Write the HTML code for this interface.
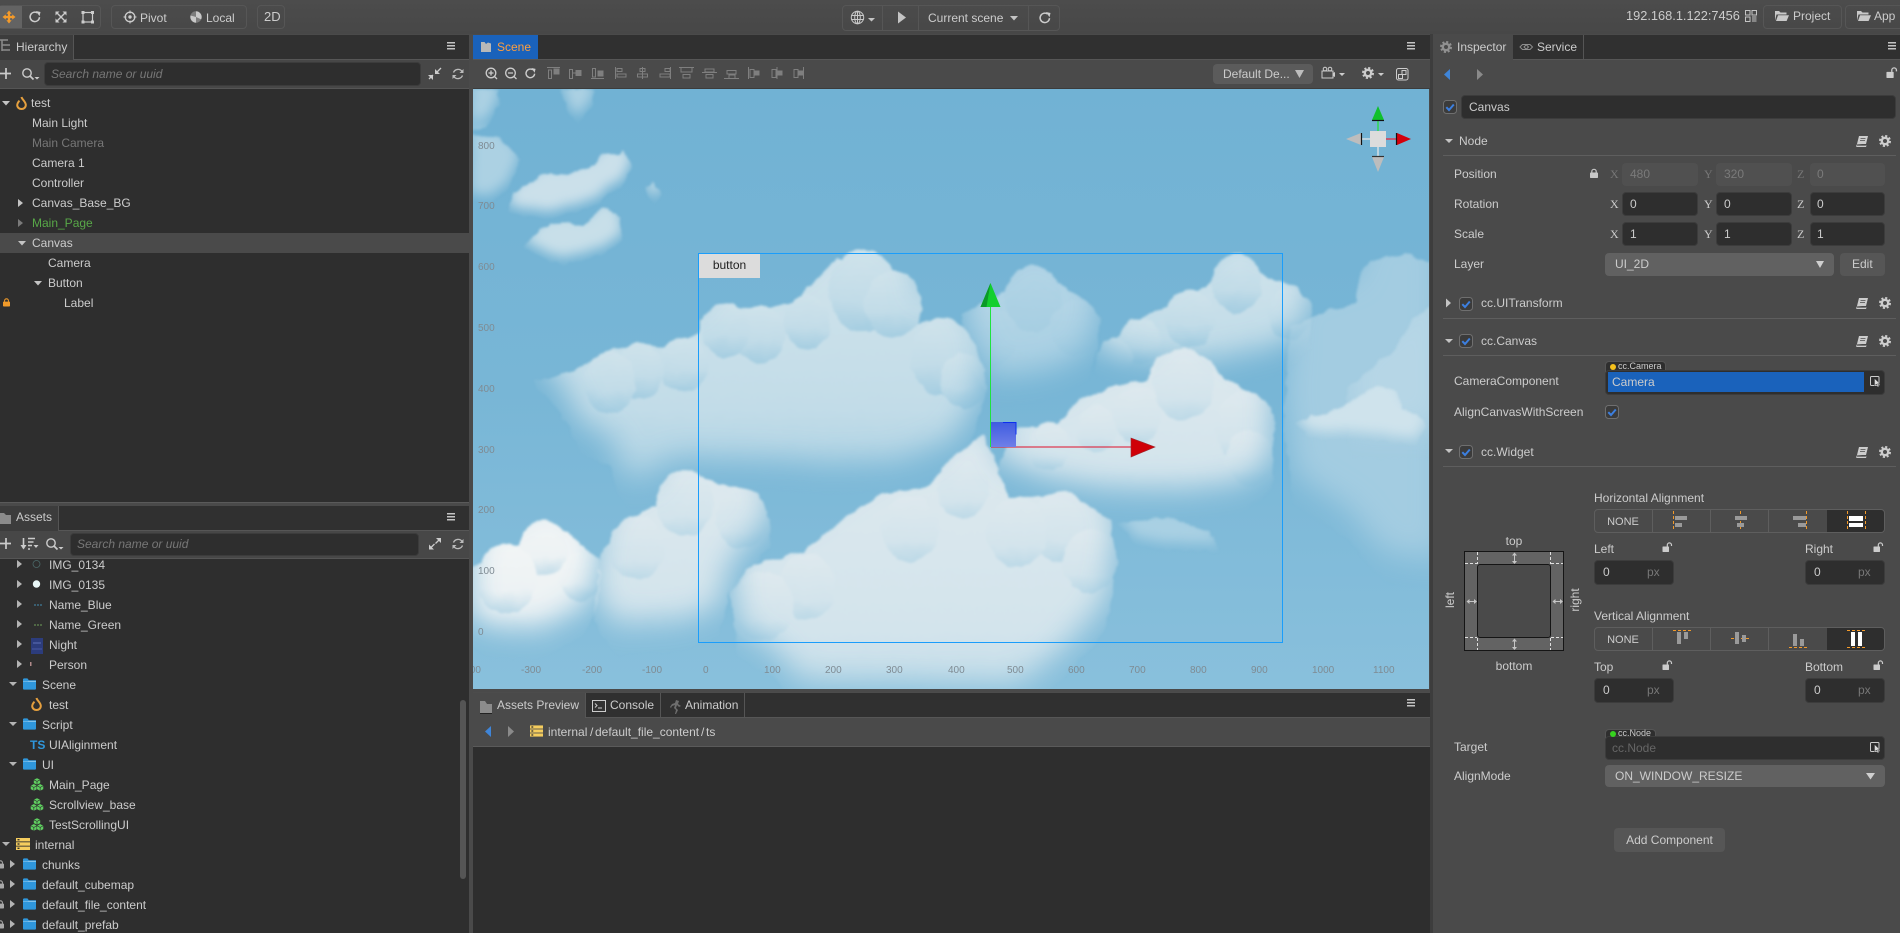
<!DOCTYPE html>
<html><head><meta charset="utf-8"><title>Cocos Creator</title>
<style>
html,body{margin:0;padding:0;width:1900px;height:933px;overflow:hidden;background:#4a4a4a}
body{position:relative;font:12px/20px "Liberation Sans",Arial,sans-serif;color:#ccc}
.b{position:absolute;box-sizing:border-box}
.t{position:absolute;white-space:pre;height:20px;line-height:20px;font-size:12px;color:#ccc}
.ru{position:absolute;white-space:pre;font-size:10px;line-height:12px;color:#7f8b93}
.i{background:#2e2e2e;border-radius:4px;border:1px solid #3c3c3c}
.o{border:1px solid #565656;border-radius:4px}
svg{position:absolute;left:0;top:0;overflow:visible}
</style></head><body>
<!-- top bar -->
<div class="b" style="left:0;top:0;width:1900px;height:34px;background:linear-gradient(#4c4c4c,#474747)"></div>
<div class="b o" style="left:-2px;top:5px;width:103px;height:24px"></div>
<div class="b" style="left:0;top:6px;width:22px;height:22px;background:#636363"></div>
<div class="b o" style="left:111px;top:5px;width:136px;height:24px"></div>
<div class="b o" style="left:257px;top:5px;width:28px;height:24px"></div>
<div class="b o" style="left:842px;top:5px;width:218px;height:26px"></div>
<div class="b" style="left:882px;top:6px;width:1px;height:24px;background:#565656"></div>
<div class="b" style="left:918px;top:6px;width:1px;height:24px;background:#565656"></div>
<div class="b" style="left:1028px;top:6px;width:1px;height:24px;background:#565656"></div>
<div class="b o" style="left:1763px;top:5px;width:79px;height:24px"></div>
<div class="b o" style="left:1845px;top:5px;width:70px;height:24px"></div>

<!-- hierarchy panel -->
<div class="b" style="left:0;top:35px;width:469px;height:467px;background:#2e2e2e"></div>
<div class="b" style="left:0;top:35px;width:469px;height:25px;background:#303030;border-bottom:1px solid #565656"></div>
<div class="b" style="left:0;top:35px;width:74px;height:25px;background:#3c3c3c;border-right:1px solid #555"></div>
<div class="b" style="left:0;top:60px;width:469px;height:29px;background:#474747;border-bottom:1px solid #555"></div>
<div class="b i" style="left:44px;top:62px;width:377px;height:24px"></div>
<div class="b" style="left:0;top:233px;width:469px;height:20px;background:#4a4a4a"></div>
<div class="b" style="left:0;top:502px;width:469px;height:1px;background:#5a5a5a"></div>

<!-- assets panel -->
<div class="b" style="left:0;top:506px;width:469px;height:427px;background:#2e2e2e"></div>
<div class="b" style="left:0;top:506px;width:469px;height:25px;background:#303030;border-bottom:1px solid #565656"></div>
<div class="b" style="left:0;top:506px;width:59px;height:25px;background:#3c3c3c;border-right:1px solid #555"></div>
<div class="b" style="left:0;top:531px;width:469px;height:28px;background:#474747;border-bottom:1px solid #555"></div>
<div class="b i" style="left:70px;top:533px;width:349px;height:23px"></div>
<div class="b" style="left:460px;top:700px;width:6px;height:179px;background:#555;border-radius:3px"></div>

<!-- scene panel -->
<div class="b" style="left:473px;top:35px;width:957px;height:25px;background:#303030;border-bottom:1px solid #565656"></div>
<div class="b" style="left:473px;top:35px;width:65px;height:24px;background:#1a62bb"></div>
<div class="b" style="left:473px;top:60px;width:957px;height:29px;background:#4a4a4a;border-bottom:1px solid #3c3c3c"></div>
<div class="b" style="left:1213px;top:64px;width:100px;height:20px;background:#5b5b5b;border-radius:4px"></div>

<!-- scene view -->
<svg width="1900" height="933" viewBox="0 0 1900 933" style="clip-path:polygon(473px 89px,1429px 89px,1429px 689px,473px 689px)">
<defs>
<linearGradient id="sky" x1="0" y1="0" x2="0" y2="1"><stop offset="0" stop-color="#71b2d4"/><stop offset=".5" stop-color="#78b6d6"/><stop offset="1" stop-color="#89c0dc"/></linearGradient>
<linearGradient id="w1" x1="0" y1="0" x2="0" y2="1"><stop offset="0" stop-color="#d0e3eb"/><stop offset=".6" stop-color="#c2dce8"/><stop offset="1" stop-color="#a4cde1"/></linearGradient>
<linearGradient id="w2" x1="0" y1="0" x2="0" y2="1"><stop offset="0" stop-color="#dee9ee"/><stop offset=".7" stop-color="#d3e4ec"/><stop offset="1" stop-color="#bcd9e7"/></linearGradient>
<linearGradient id="w3" x1="0" y1="0" x2="0" y2="1"><stop offset="0" stop-color="#f2f5f5"/><stop offset=".65" stop-color="#edf2f4"/><stop offset="1" stop-color="#c4dde9"/></linearGradient>
<linearGradient id="w4" x1="0" y1="0" x2="0" y2="1"><stop offset="0" stop-color="#b4d5e6"/><stop offset="1" stop-color="#a6cee2"/></linearGradient>
<linearGradient id="w5" x1="0" y1="0" x2="0" y2="1"><stop offset="0" stop-color="#9fcae0"/><stop offset="1" stop-color="#a8d0e3"/></linearGradient>
<filter id="f" x="-10%" y="-15%" width="120%" height="130%" color-interpolation-filters="sRGB">
<feTurbulence type="fractalNoise" baseFrequency=".07" numOctaves="3" seed="4" result="n"/>
<feDisplacementMap in="SourceGraphic" in2="n" scale="7" xChannelSelector="R" yChannelSelector="G" result="d"/>
<feGaussianBlur in="d" stdDeviation="1.2" result="a"/>
<feOffset in="d" dy="-30" result="o"/>
<feGaussianBlur in="o" stdDeviation="15" result="s"/>
<feComposite in="a" in2="s" operator="in"/>
</filter>
<filter id="g" x="-30%" y="-40%" width="160%" height="180%" color-interpolation-filters="sRGB">
<feTurbulence type="fractalNoise" baseFrequency=".1" numOctaves="3" seed="9" result="n"/>
<feDisplacementMap in="SourceGraphic" in2="n" scale="6" xChannelSelector="R" yChannelSelector="G" result="d"/>
<feGaussianBlur in="d" stdDeviation="1.2" result="a"/>
<feOffset in="d" dy="-8" result="o"/>
<feGaussianBlur in="o" stdDeviation="6" result="s"/>
<feComposite in="a" in2="s" operator="in"/>
</filter>
</defs>
<rect x="473" y="89" width="957" height="600" fill="url(#sky)"/>
<!-- right clouds (coords from x=950 origin) -->
<g filter="url(#f)"><g transform="translate(950,85) scale(.33333,.389)" fill="#a3cce1"><polygon points="1000,880 1020,620 1220,560 1240,480 1360,435 1480,460 1480,1300 1300,1280 1200,1170 1030,1080"/><circle cx="1320" cy="540" r="100"/><circle cx="1150" cy="680" r="100"/></g></g>
<g filter="url(#f)"><g transform="translate(950,85) scale(.33333,.389)" fill="#b6d6e6"><polygon points="1190,780 1320,690 1400,600 1480,540 1480,960 1200,960"/><circle cx="1440" cy="640" r="60"/></g></g>
<g filter="url(#g)"><g transform="translate(950,85) scale(.33333,.389)" fill="#cfe3ec"><polygon points="1030,870 1170,830 1280,770 1340,790 1360,830 1420,860 1400,930 1250,910 1100,910"/><circle cx="1300" cy="810" r="35"/><circle cx="1385" cy="880" r="38"/><circle cx="1090" cy="880" r="30"/></g></g>
<g filter="url(#g)"><g transform="translate(950,85) scale(.33333,.389)" fill="#a9d0e3"><polygon points="500,1130 650,1110 780,1150 810,1200 640,1195 560,1180"/></g></g>
<g filter="url(#f)"><g transform="translate(950,85) scale(.33333,.389)" fill="url(#w4)"><polygon points="30,590 170,530 250,465 330,510 400,550 450,600 440,680 420,760 300,810 130,830 60,720"/><circle cx="250" cy="550" r="85"/><circle cx="375" cy="625" r="72"/><circle cx="120" cy="650" r="80"/></g></g>
<g filter="url(#f)"><g transform="translate(950,85) scale(.33333,.389)" fill="url(#w1)"><polygon points="440,690 570,600 770,520 850,445 950,490 1040,520 1085,560 1080,680 1000,740 800,790 600,790 440,760"/><circle cx="860" cy="510" r="75"/><circle cx="1020" cy="590" r="65"/><circle cx="720" cy="600" r="75"/><circle cx="570" cy="660" r="62"/><circle cx="495" cy="700" r="50"/></g></g>
<!-- left clouds -->
<g filter="url(#g)"><g transform="translate(470,85) scale(.33333,.389)" fill="#acd1e3"><polygon points="0,10 85,10 90,50 50,110 0,120"/><polygon points="270,10 375,10 370,50 325,105 290,70"/><polygon points="0,130 90,135 150,190 120,260 70,300 0,300"/></g></g>
<g filter="url(#g)"><g transform="translate(470,85) scale(.33333,.389)" fill="#cbe0ea"><polygon points="130,280 220,230 300,225 360,210 460,170 490,210 440,260 380,310 250,345 110,330"/><circle cx="240" cy="285" r="50"/><circle cx="420" cy="225" r="50"/></g></g>
<g filter="url(#g)"><g transform="translate(470,85) scale(.33333,.389)" fill="#c8dfe9"><polygon points="160,415 210,370 280,350 340,365 400,310 450,340 460,400 390,440 280,465 200,440"/><circle cx="280" cy="410" r="52"/><circle cx="410" cy="375" r="45"/><polygon points="525,265 550,250 578,280 550,315"/></g></g>
<!-- big cloud B -->
<g filter="url(#f)"><g transform="translate(470,85) scale(.33333,.389)" fill="url(#w1)"><polygon points="190,760 300,740 430,680 520,665 590,675 690,640 690,600 780,565 860,575 980,555 1100,445 1240,460 1320,520 1330,610 1440,610 1510,670 1545,730 1540,820 1500,920 1440,1000 1250,1050 1100,1050 800,1040 600,1040 520,1090 480,1090 450,1060 420,980 330,950 300,880"/><circle cx="1180" cy="530" r="105"/><circle cx="1270" cy="565" r="85"/><circle cx="1010" cy="610" r="70"/><circle cx="870" cy="640" r="75"/><circle cx="770" cy="630" r="70"/><circle cx="640" cy="720" r="72"/><circle cx="510" cy="735" r="72"/><circle cx="420" cy="765" r="78"/><circle cx="1420" cy="700" r="98"/><circle cx="1480" cy="760" r="70"/></g></g>
<!-- E -->
<g filter="url(#f)"><g transform="translate(950,85) scale(.33333,.389)" fill="url(#w2)"><polygon points="200,880 310,880 390,810 500,770 590,760 620,700 700,685 780,710 830,760 900,795 975,850 965,1040 880,1100 700,1120 500,1120 300,1090 120,1030"/><circle cx="700" cy="770" r="92"/><circle cx="885" cy="880" r="90"/><circle cx="560" cy="850" r="72"/><circle cx="440" cy="885" r="60"/><circle cx="300" cy="930" r="62"/><circle cx="900" cy="960" r="72"/></g></g>
<!-- F -->
<g filter="url(#f)"><g transform="translate(470,85) scale(.33333,.389)" fill="url(#w2)"><polygon points="780,1300 850,1230 1000,1200 1130,1110 1240,1050 1380,1030 1440,960 1540,900 1620,1060 1720,1060 1820,1060 1920,1120 1940,1220 1910,1400 1840,1470 1770,1530 1640,1620 1000,1610 900,1520 800,1470"/><circle cx="1770" cy="1135" r="90"/><circle cx="1860" cy="1225" r="82"/><circle cx="1640" cy="1150" r="90"/><circle cx="1320" cy="1140" r="85"/><circle cx="1480" cy="1040" r="75"/><circle cx="1010" cy="1290" r="85"/><circle cx="880" cy="1340" r="90"/></g></g>
<!-- H -->
<g filter="url(#f)"><g transform="translate(470,85) scale(.33333,.389)" fill="url(#w2)"><polygon points="390,1210 480,1110 570,1080 590,1010 640,995 740,1020 830,1045 885,1080 905,1150 900,1190 780,1300 750,1420 650,1450 440,1470 370,1380"/><circle cx="645" cy="1075" r="85"/><circle cx="815" cy="1115" r="78"/><circle cx="500" cy="1190" r="82"/></g></g>
<!-- G -->
<g filter="url(#f)"><g transform="translate(470,85) scale(.33333,.389)" fill="url(#w3)"><polygon points="0,1240 150,1180 220,1125 290,1150 390,1220 385,1340 340,1420 200,1480 50,1470 0,1440"/><circle cx="222" cy="1190" r="72"/><circle cx="330" cy="1265" r="62"/><circle cx="110" cy="1270" r="90"/></g></g>
</svg>
<div class="ru" style="left:478px;top:141px">800</div><div class="ru" style="left:478px;top:201px">700</div><div class="ru" style="left:478px;top:262px">600</div><div class="ru" style="left:478px;top:323px">500</div><div class="ru" style="left:478px;top:384px">400</div><div class="ru" style="left:478px;top:445px">300</div><div class="ru" style="left:478px;top:505px">200</div><div class="ru" style="left:478px;top:566px">100</div><div class="ru" style="left:478px;top:627px">0</div>
<div class="ru" style="left:473px;top:665px;width:8px;overflow:hidden;direction:rtl">00</div><div class="ru" style="left:521px;top:665px">-300</div><div class="ru" style="left:582px;top:665px">-200</div><div class="ru" style="left:642px;top:665px">-100</div><div class="ru" style="left:703px;top:665px">0</div><div class="ru" style="left:764px;top:665px">100</div><div class="ru" style="left:825px;top:665px">200</div><div class="ru" style="left:886px;top:665px">300</div><div class="ru" style="left:948px;top:665px">400</div><div class="ru" style="left:1007px;top:665px">500</div><div class="ru" style="left:1068px;top:665px">600</div><div class="ru" style="left:1129px;top:665px">700</div><div class="ru" style="left:1190px;top:665px">800</div><div class="ru" style="left:1251px;top:665px">900</div><div class="ru" style="left:1312px;top:665px">1000</div><div class="ru" style="left:1373px;top:665px">1100</div>
<div class="b" style="left:698px;top:253px;width:585px;height:390px;border:1px solid #1a9dfb"></div>
<div class="b" style="left:699px;top:254px;width:61px;height:24px;background:#dcdcdc;color:#222;text-align:center;line-height:23px">button</div>

<!-- bottom preview panel -->
<div class="b" style="left:473px;top:692px;width:957px;height:241px;background:#2e2e2e"></div>
<div class="b" style="left:473px;top:692px;width:957px;height:26px;background:#303030;border-top:1px solid #4c4c4c;border-bottom:1px solid #565656"></div>
<div class="b" style="left:473px;top:693px;width:112px;height:25px;background:#4a4a4a"></div>
<div class="b" style="left:660px;top:693px;width:1px;height:24px;background:#555"></div>
<div class="b" style="left:744px;top:693px;width:1px;height:24px;background:#555"></div>
<div class="b" style="left:585px;top:693px;width:1px;height:24px;background:#555"></div>
<div class="b" style="left:473px;top:718px;width:957px;height:29px;background:#4a4a4a;border-bottom:1px solid #5a5a5a"></div>

<!-- inspector -->
<div class="b" style="left:1430px;top:34px;width:3px;height:899px;background:#3d3d3d"></div>
<div class="b" style="left:1433px;top:35px;width:467px;height:898px;background:#4a4a4a"></div>
<div class="b" style="left:1433px;top:35px;width:467px;height:25px;background:#303030;border-bottom:1px solid #565656"></div>
<div class="b" style="left:1433px;top:35px;width:80px;height:25px;background:#4a4a4a"></div>
<div class="b" style="left:1583px;top:35px;width:1px;height:24px;background:#555"></div>
<div class="b i" style="left:1461px;top:95px;width:435px;height:24px"></div>
<div class="b" style="left:1443px;top:155px;width:453px;height:1px;background:#5e5e5e"></div>
<div class="b" style="left:1443px;top:318px;width:453px;height:1px;background:#5e5e5e"></div>
<div class="b" style="left:1443px;top:355px;width:453px;height:1px;background:#5e5e5e"></div>
<div class="b" style="left:1443px;top:466px;width:453px;height:1px;background:#5e5e5e"></div>
<div class="b" style="left:1622px;top:163px;width:76px;height:23px;background:#505050;border-radius:4px"></div>
<div class="b" style="left:1716px;top:163px;width:76px;height:23px;background:#505050;border-radius:4px"></div>
<div class="b" style="left:1810px;top:163px;width:75px;height:23px;background:#505050;border-radius:4px"></div>
<div class="b i" style="left:1622px;top:192px;width:76px;height:24px"></div><div class="b i" style="left:1716px;top:192px;width:76px;height:24px"></div><div class="b i" style="left:1810px;top:192px;width:75px;height:24px"></div>
<div class="b i" style="left:1622px;top:222px;width:76px;height:24px"></div><div class="b i" style="left:1716px;top:222px;width:76px;height:24px"></div><div class="b i" style="left:1810px;top:222px;width:75px;height:24px"></div>
<div class="b" style="left:1605px;top:253px;width:229px;height:23px;background:#616161;border-radius:4px"></div>
<div class="b" style="left:1840px;top:253px;width:45px;height:23px;background:#565656;border-radius:4px"></div>
<div class="b" style="left:1605px;top:361px;width:61px;height:12px;background:#2e2e2e;border:1px solid #555;border-bottom:0;border-radius:4px 4px 0 0"></div>
<div class="b i" style="left:1605px;top:370px;width:280px;height:25px"></div>
<div class="b" style="left:1608px;top:372px;width:256px;height:20px;background:#1a62bb"></div>
<div class="b" style="left:1594px;top:509px;width:291px;height:24px;border:1px solid #5e5e5e;border-radius:4px"></div>
<div class="b" style="left:1827px;top:510px;width:57px;height:22px;background:#2e2e2e;border-radius:0 3px 3px 0"></div>
<div class="b" style="left:1652px;top:510px;width:1px;height:22px;background:#5e5e5e"></div><div class="b" style="left:1710px;top:510px;width:1px;height:22px;background:#5e5e5e"></div><div class="b" style="left:1768px;top:510px;width:1px;height:22px;background:#5e5e5e"></div>
<div class="b" style="left:1594px;top:627px;width:291px;height:24px;border:1px solid #5e5e5e;border-radius:4px"></div>
<div class="b" style="left:1827px;top:628px;width:57px;height:22px;background:#2e2e2e;border-radius:0 3px 3px 0"></div>
<div class="b" style="left:1652px;top:628px;width:1px;height:22px;background:#5e5e5e"></div><div class="b" style="left:1710px;top:628px;width:1px;height:22px;background:#5e5e5e"></div><div class="b" style="left:1768px;top:628px;width:1px;height:22px;background:#5e5e5e"></div>
<div class="b i" style="left:1594px;top:560px;width:80px;height:25px"></div><div class="b i" style="left:1805px;top:560px;width:80px;height:25px"></div>
<div class="b i" style="left:1594px;top:678px;width:80px;height:25px"></div><div class="b i" style="left:1805px;top:678px;width:80px;height:25px"></div>
<div class="b" style="left:1605px;top:729px;width:51px;height:10px;background:#2e2e2e;border:1px solid #555;border-bottom:0;border-radius:4px 4px 0 0"></div>
<div class="b i" style="left:1605px;top:736px;width:280px;height:24px"></div>
<div class="b" style="left:1605px;top:765px;width:280px;height:22px;background:#616161;border-radius:4px"></div>
<div class="b" style="left:1614px;top:828px;width:111px;height:24px;background:#565656;border-radius:4px"></div>
<!-- anchor box -->
<div class="b" style="left:1464px;top:551px;width:100px;height:100px;background:#636363;border:1px solid #151515"></div>
<div class="b" style="left:1477px;top:564px;width:74px;height:74px;background:#4a4a4a;border:1px solid #151515;border-radius:3px"></div>

<!-- icons overlay -->
<svg width="1900" height="933" viewBox="0 0 1900 933">
<defs>
<symbol id="folder" viewBox="0 0 14 12" overflow="visible"><path d="M0 1.2C0 .5.5 0 1.2 0h3.6l1.500 2H14v9c0 .6-.4 1-1 1H1c-.6 0-1-.4-1-1z" fill="#2f97dc"/><path d="M6 2.600h8V3.600H0V3h5z" fill="#9ed2f2"/></symbol>
<symbol id="prefab" viewBox="0 0 14 14" overflow="visible"><g fill="#5fcf60" stroke="#2e2e2e" stroke-width=".5"><path d="M7 0l3.700 1.800v3.800L7 7.400 3.300 5.600V1.800z"/><path d="M3.600 6.300L7.200 8.200v3.900L3.600 14 0 12.100V8.200z"/><path d="M10.400 6.300L14 8.200v3.900L10.400 14 6.800 12.100V8.200z"/><path d="M3.300 1.800L7 3.700l3.700-1.900M7 3.700v3.700M0 8.200l3.600 1.900 3.600-1.900M3.600 10.100V14M6.800 8.200l3.600 1.900L14 8.200M10.400 10.100V14" fill="none" stroke-width=".7"/></g></symbol>
<symbol id="fire" viewBox="0 0 11 14" overflow="visible"><path d="M5.500 1C6 3.500 9.800 5.600 9.800 9c0 2.500-2 4-4.300 4S1.200 11.500 1.200 9C1.200 7 2.600 6 3.300 4.600" fill="none" stroke="#e6a03e" stroke-width="2"/></symbol>
<symbol id="db" viewBox="0 0 14 12" overflow="visible"><rect width="14" height="3.400" fill="#f5cd5e"/><rect y="4.300" width="14" height="3.400" fill="#f5cd5e"/><rect y="8.600" width="14" height="3.400" fill="#f5cd5e"/><rect x="1.500" y="1" width="2" height="1.400" fill="#2e2e2e"/><rect x="1.500" y="5.300" width="2" height="1.400" fill="#2e2e2e"/><rect x="1.500" y="9.600" width="2" height="1.400" fill="#2e2e2e"/></symbol>
<symbol id="gear" viewBox="0 0 12 12" overflow="visible"><circle cx="6" cy="6" r="3.200" fill="none" stroke="#ccc" stroke-width="2.400"/><circle cx="6" cy="6" r="5" fill="none" stroke="#ccc" stroke-width="2" stroke-dasharray="2.100 1.830"/></symbol>
<symbol id="book" viewBox="0 0 12 11" overflow="visible"><path d="M3 0h9L10 8H1z" fill="#ccc"/><path d="M.8 8.500L0 10.500 1 11h9l.5-1.600z" fill="#ccc"/><path d="M4.500 2.500h5M4 4.500h5" stroke="#4a4a4a" stroke-width=".8"/><path d="M1 9.300h8.800" stroke="#4a4a4a" stroke-width=".7"/></symbol>
<symbol id="chk" viewBox="0 0 14 14" overflow="visible"><rect x=".5" y=".5" width="13" height="13" rx="3" fill="#3b3b3b" stroke="#6f6f6f"/><path d="M3.300 7.200l2.700 2.800 4.800-5.500" fill="none" stroke="#3c7fe0" stroke-width="2"/></symbol>
<symbol id="ul" viewBox="0 0 10 9" overflow="visible"><rect y="3.500" width="6.500" height="5.500" rx=".6" fill="#ccc"/><path d="M4.800 3.500V2A2 2 0 0 1 9 2v1" fill="none" stroke="#ccc" stroke-width="1.200"/></symbol>
<symbol id="pick" viewBox="0 0 11 11" overflow="visible"><rect x=".5" y=".5" width="8.500" height="9" rx="1" fill="none" stroke="#ccc"/><path d="M4.500 2.500l5.500 5.200-2.400.1 1.300 3-1.300.2-1.200-2.900-1.900 1.500z" fill="#ddd" stroke="#2e2e2e" stroke-width=".4"/></symbol>
<symbol id="ham" viewBox="0 0 8 8" overflow="visible"><path d="M0 .75h8M0 3.750h8M0 6.750h8" stroke="#c4c4c4" stroke-width="1.500"/></symbol>
<symbol id="rf" viewBox="0 0 12 12" overflow="visible"><path d="M10.200 3.500A5 5 0 0 0 1.500 4.500M1.800 8.500A5 5 0 0 0 10.500 7.500" fill="none" stroke="#bbb" stroke-width="1.300"/><path d="M11.500 1v4h-4zM.5 11V7h4z" fill="#bbb"/></symbol>
<symbol id="rot" viewBox="0 0 12 12" overflow="visible"><path d="M10.500 6.200A4.700 4.700 0 1 1 8.500 2" fill="none" stroke="#ccc" stroke-width="1.500"/><path d="M7 0l4.500 1-1 4.200z" fill="#ccc"/></symbol>
<symbol id="mag" viewBox="0 0 12 12" overflow="visible"><circle cx="5" cy="5" r="4.200" fill="none" stroke="#ccc" stroke-width="1.400"/><path d="M8 8l3.500 3.500" stroke="#ccc" stroke-width="1.700"/></symbol>
<symbol id="lk" viewBox="0 0 8 9" overflow="visible"><rect y="3.500" width="8" height="5.500" rx=".8" fill="currentColor"/><path d="M1.800 3.800V2.500a2.200 2.200 0 0 1 4.400 0v1.300" fill="none" stroke="currentColor" stroke-width="1.200"/></symbol>
</defs>

<!-- top bar icons -->
<path d="M9 11l-2 2.500h1.200v2.700H5.500V15L3 17l2.500 2v-1.200h2.700v2.700H7L9 23l2-2.500H9.800v-2.700h2.700V19L15 17l-2.500-2v1.200H9.800v-2.700H11z" fill="#f39a2a" stroke="#f39a2a" stroke-width=".6"/>
<use href="#rot" x="29" y="11" width="12" height="12"/>
<path d="M57 13l8 8M65 13l-8 8" stroke="#ccc" stroke-width="1.400"/><path d="M55.500 11.500h4l-4 4zM66.500 11.500h-4l4 4zM55.500 22.500h4l-4-4zM66.500 22.500h-4l4-4z" fill="#ccc"/>
<rect x="83" y="12.500" width="9.500" height="9.500" fill="none" stroke="#ccc" stroke-width="1.200"/><path d="M81.500 11h3v3h-3zM91 11h3v3h-3zM81.500 20.500h3v3h-3zM91 20.500h3v3h-3z" fill="#ccc"/>
<circle cx="130" cy="17" r="4.800" fill="none" stroke="#ccc" stroke-width="1.300"/><circle cx="130" cy="17" r="1.700" fill="#ccc"/><path d="M130 10.500v3M130 20.500v3M123.500 17h3M133.500 17h3" stroke="#ccc" stroke-width="1"/>
<circle cx="196" cy="17" r="5.700" fill="#c8c8c8"/><path d="M196 17l0-6a6 6 0 0 0-5.500 4.500zM196 17l5.500 2.500a6 6 0 0 1-5.500 3.500z" fill="#4a4a4a" opacity=".6"/>
<g fill="none" stroke="#c8c8c8" stroke-width="1"><circle cx="857.500" cy="17.500" r="6.200"/><ellipse cx="857.500" cy="17.500" rx="2.800" ry="6.200"/><path d="M851.300 15.500h12.400M851.300 19.500h12.400M857.500 11.300v12.400"/></g>
<path d="M868 18h7l-3.500 3.500zM1010 16h8l-4 4.500z" fill="#c4c4c4"/>
<path d="M898 11.500l8 6-8 6z" fill="#c4c4c4"/>
<use href="#rot" x="1039" y="12" width="12" height="12"/>
<g fill="none" stroke="#c4c4c4"><rect x="1745.500" y="10.500" width="4.500" height="4.500"/><rect x="1752" y="10.500" width="4.500" height="4.500"/><rect x="1745.500" y="17" width="4.500" height="4.500"/><path d="M1752 17h4.500M1752 19h4.500M1752 21h4.500"/></g>
<path d="M1775 11h4l1.500 1.500h6v2h-10l-1.500 6zM1778 15.200h11l-2.400 5.800h-10.600z" fill="#c8c8c8"/>
<path d="M1857 11h4l1.500 1.500h6v2h-10l-1.500 6zM1860 15.200h11l-2.400 5.800h-10.600z" fill="#c8c8c8"/>

<!-- hamburgers -->
<use href="#ham" x="447" y="42" width="8" height="8"/><use href="#ham" x="447" y="513" width="8" height="8"/><use href="#ham" x="1407" y="42" width="8" height="8"/><use href="#ham" x="1888" y="42" width="8" height="8"/><use href="#ham" x="1407" y="699" width="8" height="8"/>

<!-- hierarchy tab / toolbar -->
<path d="M-1 40h9M2 40v11M2 45h8M2 50h8" stroke="#8b8b8b" stroke-width="1.500" fill="none"/>
<path d="M0 73.500h11M6 68v11" stroke="#ccc" stroke-width="1.700"/>
<use href="#mag" x="22" y="68" width="12" height="12"/><path d="M34.500 77h5l-2.500 2.500z" fill="#ccc"/>
<path d="M436 73l5-5M433 75l-4 4" stroke="#ccc" stroke-width="1.300" fill="none"/><path d="M435 74v-5l5 5zM433 75v5l-5-5z" fill="#ccc"/>
<use href="#rf" x="452" y="68" width="12" height="12"/>
<use href="#fire" x="16" y="96" width="11" height="14"/>
<path d="M2 101h8l-4 4.500zM18 241h8l-4 4.500zM34 281h8l-4 4.500z" fill="#c4c4c4"/>
<path d="M18 199v8l5-4z" fill="#c4c4c4"/><path d="M18 219v8l5-4z" fill="#7a7a7a"/>
<g color="#f09a2a"><use href="#lk" x="3" y="298" width="7" height="9"/></g>

<!-- assets toolbar -->
<path d="M0 543.500h11M6 538v11" stroke="#ccc" stroke-width="1.700"/>
<path d="M23.500 538v10.500" stroke="#ccc" stroke-width="1.600"/><path d="M20.500 545l3 4.500 3-4.500z" fill="#ccc"/><path d="M28 538.500h7M28 542h5.500M28 545.500h4M28 549h2" stroke="#ccc" stroke-width="1.400"/><path d="M33.500 545h5l-2.500 3z" fill="#ccc"/>
<use href="#mag" x="46" y="538" width="12" height="12"/><path d="M58.500 547h5l-2.500 2.500z" fill="#ccc"/>
<path d="M439 540l-3.500 3.500M431 547.500l3.500-3.500" stroke="#ccc" stroke-width="1.300" fill="none"/><path d="M441 538h-5l5 5zM429 549.500v-5l5 5z" fill="#ccc"/>
<use href="#rf" x="452" y="538" width="12" height="12"/>
<path d="M-1 513h5l2 2h5v9H-1z" fill="#8b8b8b"/>

<!-- asset rows icons -->
<g fill="#b4b4b4"><path d="M17 560v8l5-4zM17 580v8l5-4zM17 600v8l5-4zM17 620v8l5-4zM17 640v8l5-4zM17 660v8l5-4z"/><path d="M10 860v8l5-4zM10 880v8l5-4zM10 900v8l5-4zM10 920v8l5-4z"/><path d="M9 682h8l-4 4zM9 722h8l-4 4zM9 762h8l-4 4zM2 842h8l-4 4z"/></g>
<g color="#a8a8a8"><use href="#lk" x="-3" y="860" width="7" height="9"/><use href="#lk" x="-3" y="880" width="7" height="9"/><use href="#lk" x="-3" y="900" width="7" height="9"/><use href="#lk" x="-3" y="920" width="7" height="9"/></g>
<circle cx="36.500" cy="564" r="3.500" fill="none" stroke="#4b6a6a" stroke-width=".8"/><circle cx="36.500" cy="584" r="3.700" fill="#e8f6f6"/>
<path d="M34 605h9" stroke="#3d6e86" stroke-width="1.500" stroke-dasharray="2 1"/><path d="M34 625h9" stroke="#5a7a4c" stroke-width="1.500" stroke-dasharray="2 1"/>
<rect x="31" y="638" width="12" height="16" fill="#2c3c7c"/><rect x="33" y="642" width="8" height="2" fill="#45569a"/><rect x="32" y="648" width="10" height="2" fill="#3a4a90"/>
<rect x="30" y="662" width="1.500" height="4" fill="#b08a8a"/>
<use href="#folder" x="23" y="678" width="13" height="12"/><use href="#folder" x="23" y="718" width="13" height="12"/><use href="#folder" x="23" y="758" width="13" height="12"/><use href="#folder" x="23" y="858" width="13" height="12"/><use href="#folder" x="23" y="878" width="13" height="12"/><use href="#folder" x="23" y="898" width="13" height="12"/><use href="#folder" x="23" y="918" width="13" height="12"/>
<use href="#fire" x="31" y="697" width="11" height="14"/>
<use href="#prefab" x="30" y="778" width="14" height="13"/><use href="#prefab" x="30" y="798" width="14" height="13"/><use href="#prefab" x="30" y="818" width="14" height="13"/>
<use href="#db" x="16" y="838" width="14" height="12"/>

<!-- scene tab/toolbar icons -->
<path d="M481 48V42h3.500l1.500 2 2-1.500 3 1V52h-10z" fill="#b8b8b8"/>
<g fill="none" stroke="#ccc" stroke-width="1.300"><circle cx="491" cy="73" r="4.800"/><path d="M494.500 76.500l2.500 2.500M488.500 73h5M491 70.500v5"/><circle cx="510.500" cy="73" r="4.800"/><path d="M514 76.500l2.500 2.500M508 73h5"/></g>
<use href="#rot" x="525" y="68" width="11" height="11"/>
<g fill="none" stroke="#7f7f7f">
<path d="M547 67.500h13M548.500 70h3v8.500h-3z"/><rect x="554" y="69" width="5" height="5" fill="#7f7f7f"/>
<path d="M569.500 69.500h3v9h-3z"/><rect x="576" y="70.500" width="5" height="5" fill="#7f7f7f"/><path d="M573 73h3"/>
<path d="M591 78.500h13M592.500 68.500h3v8.500h-3z"/><rect x="598" y="71" width="5" height="5" fill="#7f7f7f"/>
<path d="M615.500 67v12M617 68.500h5v3h-5zM617 74h9v3h-9z"/>
<path d="M642.500 67v12M640 68.500h5v3h-5zM637.500 74h10v3h-10z"/>
<path d="M670.500 67v12M665 68.500h5v3h-5zM660 74h10v3h-10z"/>
<path d="M679 67.500h15M681 67.500v4.500h11v-4.500M683 74.500h7v3.500h-7z"/>
<path d="M702 72.500h15M705 69h9v3h-9zM706 74.500h7v3.500h-7z"/>
<path d="M724 78.500h15M727 70.500h9v3.500h-9zM729 75h6v3.500h-6z"/>
<path d="M748.500 67v12M750 69.500h4v8h-4z"/><rect x="755" y="71" width="4" height="4" fill="#7f7f7f"/>
<path d="M777 67v12M772 69.500h4v8h-4z"/><rect x="778" y="71" width="4" height="4" fill="#7f7f7f"/>
<path d="M803.500 67v12M794 69.500h4v8h-4z"/><rect x="799" y="71" width="4" height="4" fill="#7f7f7f"/>
</g>
<path d="M1295 70h9l-4.500 8z" fill="#bdbdbd"/>
<path d="M1322 71h11v7h-11z" fill="none" stroke="#ccc"/><circle cx="1325" cy="69" r="1.800" fill="none" stroke="#ccc"/><circle cx="1330" cy="69" r="1.800" fill="none" stroke="#ccc"/><path d="M1333 73l2-1v5l-2-1z" fill="#ccc"/><path d="M1339 73h6l-3 3zM1378 73h6l-3 3z" fill="#ccc"/>
<use href="#gear" x="1362" y="67" width="12" height="12"/>
<rect x="1396.500" y="68.500" width="11.500" height="11.500" rx="2" fill="none" stroke="#ccc"/><path d="M1402 70.500h4v4h-4zM1398.500 74.500h4v4h-4z" fill="none" stroke="#ccc"/>

<!-- scene gizmos -->
<path d="M990.500 307v140" stroke="#1fe33d" stroke-width="1"/><path d="M991 447h140" stroke="#e0102a" stroke-width="1"/>
<path d="M990.500 283l-10 24h20z" fill="#12cf2e"/><path d="M990.500 283l-10 24h6z" fill="#0a9a28"/>
<path d="M1131 438v19l24-10z" fill="#cf0008"/><path d="M1131 438v19l24-10z" fill="none" stroke="#9a2a30" stroke-width=".6"/>
<defs><linearGradient id="bl" x1="0" y1="0" x2="0" y2="1"><stop offset="0" stop-color="#3f5ce0"/><stop offset="1" stop-color="#6f7fe8"/></linearGradient></defs>
<rect x="991" y="422" width="25" height="25" fill="url(#bl)"/><path d="M1003 422.500h13v12" fill="none" stroke="#0b2ff0" stroke-width="1"/>
<rect x="1370" y="131" width="16" height="16" fill="#dcdcdc"/>
<path d="M1378 120v11" stroke="#25e03c" stroke-width="1.300"/><path d="M1386 139h10" stroke="#e8283c" stroke-width="1.300"/><path d="M1361 139h9M1378 147v10" stroke="#e6e6e6" stroke-width="1.300"/>
<path d="M1378 106l-6 14h12z" fill="#10c02c"/><path d="M1372 120.500h12" stroke="#111" stroke-width="1.200"/>
<path d="M1397 133v12l14-6z" fill="#d3000c"/><path d="M1396.500 133v12" stroke="#111" stroke-width="1.200"/>
<path d="M1361 133v12l-15-6z" fill="#bdbdbd"/><path d="M1361.500 133v12" stroke="#111" stroke-width="1.200"/>
<path d="M1372 157h12l-6 15z" fill="#bdbdbd"/><path d="M1372 156.500h12" stroke="#333" stroke-width="1.200"/>

<!-- preview icons -->
<path d="M480 701h5l2 3h5v9h-12z" fill="#8c8c8c"/><path d="M480 713.500h12" stroke="#222"/>
<rect x="592.500" y="700.500" width="13" height="11" fill="#333" stroke="#ccc"/><path d="M595 703.500l2 2-2 2M598 708h4" stroke="#ccc" fill="none"/>
<path d="M676 700l3 1-1 3 3 2-2 1-2-2-1 3 2 2-2 4h-1l1-4-2-2 1-3-3 1-1 2-1-1 2-3 3-1z" fill="#6e6e6e"/>
<path d="M491 726v11l-6-5.500z" fill="#3f85d8"/><path d="M508 726v11l6-5.500z" fill="#8a8a8a"/>
<use href="#db" x="530" y="725" width="13" height="12"/>

<!-- inspector icons -->
<use href="#gear" x="1440" y="41" width="12" height="12" opacity=".55"/>
<path d="M1520 47l2.500-2.500h3.500l2.500 2.500-2.500 2.500h-3.500zM1524 47l2.500-2.500h3.500l2.500 2.500-2.500 2.500h-3.500z" fill="none" stroke="#8e8e8e" stroke-width="1"/>
<path d="M1450 69v11l-6-5.500z" fill="#3f85d8"/><path d="M1477 69v11l6-5.500z" fill="#8a8a8a"/>
<use href="#ul" x="1886" y="68" width="12" height="10"/>
<use href="#chk" x="1443" y="100" width="14" height="14"/>
<path d="M1445 139h8l-4 4zM1445 339h8l-4 4zM1445 449h8l-4 4z" fill="#c4c4c4"/><path d="M1446 298.500v9l5-4.500z" fill="#c4c4c4"/>
<use href="#book" x="1856" y="136" width="12" height="11"/><use href="#gear" x="1879" y="135" width="12" height="12"/>
<use href="#book" x="1856" y="298" width="12" height="11"/><use href="#gear" x="1879" y="297" width="12" height="12"/>
<use href="#book" x="1856" y="336" width="12" height="11"/><use href="#gear" x="1879" y="335" width="12" height="12"/>
<use href="#book" x="1856" y="447" width="12" height="11"/><use href="#gear" x="1879" y="446" width="12" height="12"/>
<use href="#chk" x="1459" y="297" width="14" height="14"/><use href="#chk" x="1459" y="334" width="14" height="14"/><use href="#chk" x="1459" y="445" width="14" height="14"/><use href="#chk" x="1605" y="405" width="14" height="14"/>
<g color="#c8c8c8"><use href="#lk" x="1590" y="169" width="8" height="9"/></g>
<path d="M1816 261h8l-4 7zM1866 773h9l-4.500 6.500z" fill="#cfcfcf"/>
<circle cx="1613" cy="367" r="3" fill="#f4c01c"/><circle cx="1613" cy="734" r="3" fill="#37d21f"/>
<use href="#pick" x="1870" y="376" width="11" height="11"/><use href="#pick" x="1870" y="742" width="11" height="11"/>
<use href="#ul" x="1662" y="543" width="11" height="9"/><use href="#ul" x="1873" y="543" width="11" height="9"/><use href="#ul" x="1662" y="661" width="11" height="9"/><use href="#ul" x="1873" y="661" width="11" height="9"/>
<!-- align -->
<g stroke="#f39a2a" stroke-dasharray="3 2" stroke-width="1"><path d="M1673.500 511v20M1740.500 511v20M1806.500 511v20M1847.500 511v20M1865.500 511v20M1673 630.500h18M1731 638.500h18M1789 647.500h18M1847 630.500h18M1847 647.500h18"/></g>
<g fill="#9a9a9a"><rect x="1675" y="516" width="12" height="4"/><rect x="1675" y="523" width="7" height="4"/><rect x="1735" y="516" width="12" height="4"/><rect x="1737" y="523" width="7" height="4"/><rect x="1793" y="516" width="13" height="4"/><rect x="1798" y="523" width="8" height="4"/>
<rect x="1677" y="632" width="4" height="12"/><rect x="1684" y="632" width="4" height="7"/><rect x="1735" y="632" width="4" height="12"/><rect x="1742" y="635" width="4" height="7"/><rect x="1793" y="634" width="4" height="12"/><rect x="1800" y="639" width="4" height="7"/></g>
<g fill="#fff"><rect x="1849" y="516" width="14" height="5"/><rect x="1849" y="523" width="14" height="4"/><rect x="1851" y="632" width="4" height="14"/><rect x="1858" y="632" width="4" height="14"/></g>
<!-- anchor box details -->
<g stroke="#e0e0e0" stroke-dasharray="3 2" fill="none"><path d="M1477.500 552v12M1550.500 552v12M1465 563.500h12M1551 563.500h12M1477.500 638v12M1550.500 638v12M1465 637.500h12M1551 637.500h12"/></g>
<path d="M1514.500 555v7M1514.500 640v7M1469 601.500h6M1555 601.500h6" stroke="#c6c6c6" fill="none"/>
<path d="M1514.500 552.500l-2.500 3h5zM1514.500 564l-2.500-3h5zM1514.500 638.500l-2.500 3h5zM1514.500 650l-2.500-3h5zM1466.500 601.500l3-2.500v5zM1477 601.500l-3-2.500v5zM1552.500 601.500l3-2.500v5zM1563 601.500l-3-2.500v5z" fill="#c6c6c6"/>
</svg>

<!-- text -->
<div class="t" style="left:140px;top:8px">Pivot</div><div class="t" style="left:206px;top:8px">Local</div><div class="t" style="left:264px;top:7px;font-size:13px">2D</div>
<div class="t" style="left:928px;top:8px">Current scene</div>
<div class="t" style="left:1626px;top:6px;font-size:12.8px">192.168.1.122:7456</div>
<div class="t" style="left:1793px;top:6px">Project</div><div class="t" style="left:1874px;top:6px">App</div>

<div class="t" style="left:16px;top:37px">Hierarchy</div>
<div class="t" style="left:51px;top:64px;font-style:italic;color:#777">Search name or uuid</div>
<div class="t" style="left:31px;top:93px">test</div>
<div class="t" style="left:32px;top:113px">Main Light</div>
<div class="t" style="left:32px;top:133px;color:#777">Main Camera</div>
<div class="t" style="left:32px;top:153px">Camera 1</div>
<div class="t" style="left:32px;top:173px">Controller</div>
<div class="t" style="left:32px;top:193px">Canvas_Base_BG</div>
<div class="t" style="left:32px;top:213px;color:#58a848">Main_Page</div>
<div class="t" style="left:32px;top:233px">Canvas</div>
<div class="t" style="left:48px;top:253px">Camera</div>
<div class="t" style="left:48px;top:273px">Button</div>
<div class="t" style="left:64px;top:293px">Label</div>

<div class="t" style="left:16px;top:507px">Assets</div>
<div class="t" style="left:77px;top:534px;font-style:italic;color:#777">Search name or uuid</div>
<div class="t" style="left:49px;top:555px">IMG_0134</div>
<div class="t" style="left:49px;top:575px">IMG_0135</div>
<div class="t" style="left:49px;top:595px">Name_Blue</div>
<div class="t" style="left:49px;top:615px">Name_Green</div>
<div class="t" style="left:49px;top:635px">Night</div>
<div class="t" style="left:49px;top:655px">Person</div>
<div class="t" style="left:42px;top:675px">Scene</div>
<div class="t" style="left:49px;top:695px">test</div>
<div class="t" style="left:42px;top:715px">Script</div>
<div class="t" style="left:30px;top:735px;color:#2f97dc;font-weight:bold">TS</div>
<div class="t" style="left:49px;top:735px">UIAliginment</div>
<div class="t" style="left:42px;top:755px">UI</div>
<div class="t" style="left:49px;top:775px">Main_Page</div>
<div class="t" style="left:49px;top:795px">Scrollview_base</div>
<div class="t" style="left:49px;top:815px">TestScrollingUI</div>
<div class="t" style="left:35px;top:835px">internal</div>
<div class="t" style="left:42px;top:855px">chunks</div>
<div class="t" style="left:42px;top:875px">default_cubemap</div>
<div class="t" style="left:42px;top:895px">default_file_content</div>
<div class="t" style="left:42px;top:915px">default_prefab</div>

<div class="t" style="left:497px;top:37px;color:#ff9e3d">Scene</div>
<div class="t" style="left:1223px;top:64px">Default De...</div>

<div class="t" style="left:497px;top:695px">Assets Preview</div>
<div class="t" style="left:610px;top:695px">Console</div>
<div class="t" style="left:685px;top:695px">Animation</div>
<div class="t" style="left:548px;top:722px">internal</div><div class="t" style="left:590px;top:722px">/</div><div class="t" style="left:595px;top:722px">default_file_content</div><div class="t" style="left:701px;top:722px">/</div><div class="t" style="left:706px;top:722px">ts</div>

<div class="t" style="left:1457px;top:37px">Inspector</div>
<div class="t" style="left:1537px;top:37px">Service</div>
<div class="t" style="left:1469px;top:97px">Canvas</div>
<div class="t" style="left:1459px;top:131px">Node</div>
<div class="t" style="left:1454px;top:164px">Position</div>
<div class="t" style="left:1454px;top:194px">Rotation</div>
<div class="t" style="left:1454px;top:224px">Scale</div>
<div class="t" style="left:1454px;top:254px">Layer</div>
<div class="t" style="left:1610px;top:164px;font-family:'Liberation Serif',serif;color:#777">X</div><div class="t" style="left:1704px;top:164px;font-family:'Liberation Serif',serif;color:#777">Y</div><div class="t" style="left:1797px;top:164px;font-family:'Liberation Serif',serif;color:#777">Z</div>
<div class="t" style="left:1610px;top:194px;font-family:'Liberation Serif',serif">X</div><div class="t" style="left:1704px;top:194px;font-family:'Liberation Serif',serif">Y</div><div class="t" style="left:1797px;top:194px;font-family:'Liberation Serif',serif">Z</div>
<div class="t" style="left:1610px;top:224px;font-family:'Liberation Serif',serif">X</div><div class="t" style="left:1704px;top:224px;font-family:'Liberation Serif',serif">Y</div><div class="t" style="left:1797px;top:224px;font-family:'Liberation Serif',serif">Z</div>
<div class="t" style="left:1630px;top:164px;color:#7a7a7a">480</div><div class="t" style="left:1724px;top:164px;color:#7a7a7a">320</div><div class="t" style="left:1817px;top:164px;color:#7a7a7a">0</div>
<div class="t" style="left:1630px;top:194px">0</div><div class="t" style="left:1724px;top:194px">0</div><div class="t" style="left:1817px;top:194px">0</div>
<div class="t" style="left:1630px;top:224px">1</div><div class="t" style="left:1724px;top:224px">1</div><div class="t" style="left:1817px;top:224px">1</div>
<div class="t" style="left:1615px;top:254px">UI_2D</div><div class="t" style="left:1852px;top:254px">Edit</div>
<div class="t" style="left:1481px;top:293px">cc.UITransform</div>
<div class="t" style="left:1481px;top:331px">cc.Canvas</div>
<div class="t" style="left:1454px;top:371px">CameraComponent</div>
<div class="t" style="left:1618px;top:356px;font-size:9px">cc.Camera</div>
<div class="t" style="left:1612px;top:372px">Camera</div>
<div class="t" style="left:1454px;top:402px">AlignCanvasWithScreen</div>
<div class="t" style="left:1481px;top:442px">cc.Widget</div>
<div class="t" style="left:1594px;top:488px">Horizontal Alignment</div>
<div class="t" style="left:1594px;top:512px;width:58px;text-align:center;font-size:11px">NONE</div>
<div class="t" style="left:1594px;top:539px">Left</div><div class="t" style="left:1805px;top:539px">Right</div>
<div class="t" style="left:1603px;top:562px">0</div><div class="t" style="left:1647px;top:562px;color:#777">px</div><div class="t" style="left:1814px;top:562px">0</div><div class="t" style="left:1858px;top:562px;color:#777">px</div>
<div class="t" style="left:1594px;top:606px">Vertical Alignment</div>
<div class="t" style="left:1594px;top:630px;width:58px;text-align:center;font-size:11px">NONE</div>
<div class="t" style="left:1594px;top:657px">Top</div><div class="t" style="left:1805px;top:657px">Bottom</div>
<div class="t" style="left:1603px;top:680px">0</div><div class="t" style="left:1647px;top:680px;color:#777">px</div><div class="t" style="left:1814px;top:680px">0</div><div class="t" style="left:1858px;top:680px;color:#777">px</div>
<div class="t" style="left:1464px;top:531px;width:100px;text-align:center">top</div>
<div class="t" style="left:1464px;top:656px;width:100px;text-align:center">bottom</div>
<div class="t" style="left:1430px;top:590px;width:40px;text-align:center;transform:rotate(-90deg)">left</div>
<div class="t" style="left:1555px;top:590px;width:40px;text-align:center;transform:rotate(-90deg)">right</div>
<div class="t" style="left:1454px;top:737px">Target</div>
<div class="t" style="left:1618px;top:723px;font-size:9px">cc.Node</div>
<div class="t" style="left:1612px;top:738px;color:#666">cc.Node</div>
<div class="t" style="left:1454px;top:766px">AlignMode</div>
<div class="t" style="left:1615px;top:766px">ON_WINDOW_RESIZE</div>
<div class="t" style="left:1614px;top:830px;width:111px;text-align:center">Add Component</div>
</body></html>
